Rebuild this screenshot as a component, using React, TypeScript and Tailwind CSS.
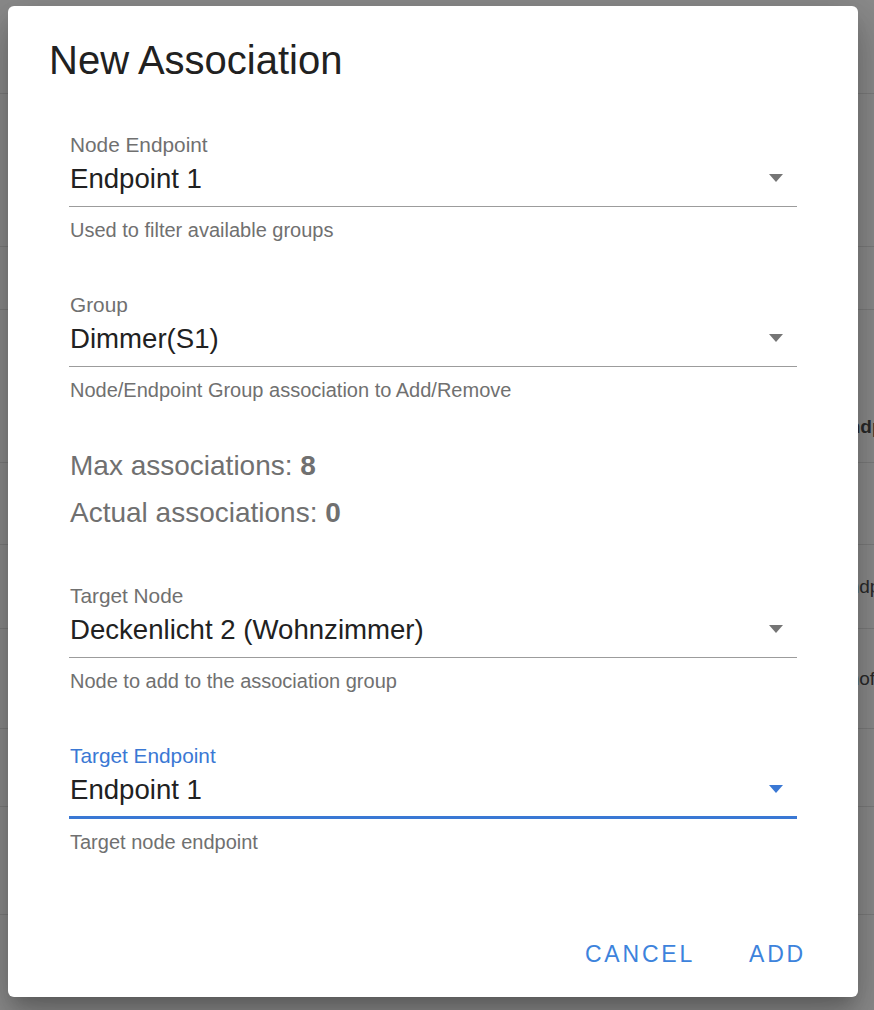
import { useState } from "react";

const rows = [
  { h: "h-[94px]", text: "", cls: "items-center" },
  { h: "h-[153px]", text: "", cls: "items-center" },
  { h: "h-[63px]", text: "", cls: "items-center" },
  { h: "h-[153px]", text: "Endp", cls: "items-end pb-[23px] font-bold" },
  { h: "h-[82px]", text: "", cls: "items-center" },
  { h: "h-[84px]", text: "Endp", cls: "items-center" },
  { h: "h-[100px]", text: "Enof", cls: "items-center" },
  { h: "h-[78px]", text: "", cls: "items-center" },
  { h: "h-[108px]", text: "", cls: "items-center" },
];

type FieldProps = {
  label: string;
  value: string;
  hint: string;
  focused?: boolean;
};

function Caret({ color }: { color: string }) {
  return (
    <svg width="14" height="8" viewBox="0 0 14 8" className="mr-[14px] mb-[3px]">
      <path d="M0 0 L14 0 L7 8 Z" fill={color} />
    </svg>
  );
}

function SelectField({ label, value, hint, focused }: FieldProps) {
  return (
    <div>
      <div
        className={`h-[24px] text-[20.8px] leading-[24px] pl-px ${
          focused ? "text-[#3a78d4]" : "text-[#707070]"
        }`}
      >
        {label}
      </div>
      <div
        className={`mt-[4px] flex items-start justify-between ${
          focused
            ? "h-[47px] border-b-[3px] border-[#3a78d4]"
            : "h-[46px] border-b border-[#9c9c9c]"
        }`}
      >
        <span className="pl-px text-[27.6px] leading-[36px] text-[#212121]">{value}</span>
        <div className="flex h-[36px] items-center">
          <Caret color={focused ? "#3a78d4" : "#757575"} />
        </div>
      </div>
      <div className="mt-[11px] h-[24px] pl-px text-[20px] leading-[24px] text-[#707070]">
        {hint}
      </div>
    </div>
  );
}

export default function App() {
  const [open] = useState(true);

  return (
    <div className="relative h-[1010px] w-[874px] overflow-hidden bg-white font-['Liberation_Sans',Arial,sans-serif]">
      {/* page underneath the dialog */}
      <div>
        {rows.map((r, i) => (
          <div
            key={i}
            className={`${r.h} ${r.cls} flex border-b border-[#e0e0e0] pl-[836px] text-[19px] leading-[24px] text-[#333]`}
          >
            {r.text}
          </div>
        ))}
      </div>

      {/* overlay */}
      <div className="absolute inset-0 bg-[rgba(33,33,33,0.52)]" />

      {open && (
        <div className="absolute left-[8px] top-[6px] flex h-[991px] w-[850px] flex-col rounded-[6px] bg-white shadow-[0_11px_15px_-7px_rgba(0,0,0,0.2),0_24px_38px_3px_rgba(0,0,0,0.14),0_9px_46px_8px_rgba(0,0,0,0.12)]">
          <h2 className="pl-[41px] pt-[30px] text-[40px] leading-[48px] text-[#212121]">
            New Association
          </h2>

          <div className="px-[61px] pt-[49px]">
            <SelectField
              label="Node Endpoint"
              value="Endpoint 1"
              hint="Used to filter available groups"
            />
            <div className="mt-[51px]">
              <SelectField
                label="Group"
                value="Dimmer(S1)"
                hint="Node/Endpoint Group association to Add/Remove"
              />
            </div>

            <div className="mt-[46px] pl-px text-[28px] leading-[36px] text-[#707070]">
              Max associations: <b>8</b>
            </div>
            <div className="mt-[11px] pl-px text-[28px] leading-[36px] text-[#707070]">
              Actual associations: <b>0</b>
            </div>

            <div className="mt-[53px]">
              <SelectField
                label="Target Node"
                value="Deckenlicht 2 (Wohnzimmer)"
                hint="Node to add to the association group"
              />
            </div>
            <div className="mt-[51px]">
              <SelectField
                label="Target Endpoint"
                value="Endpoint 1"
                hint="Target node endpoint"
                focused
              />
            </div>
          </div>

          <div className="mt-auto mb-[25px] flex justify-end gap-[54px] pr-[52px]">
            <button className="text-[23px] leading-[36px] tracking-[2.8px] text-[#3d83dc]">
              CANCEL
            </button>
            <button className="text-[23px] leading-[36px] tracking-[2.8px] text-[#3d83dc]">
              ADD
            </button>
          </div>
        </div>
      )}
    </div>
  );
}
